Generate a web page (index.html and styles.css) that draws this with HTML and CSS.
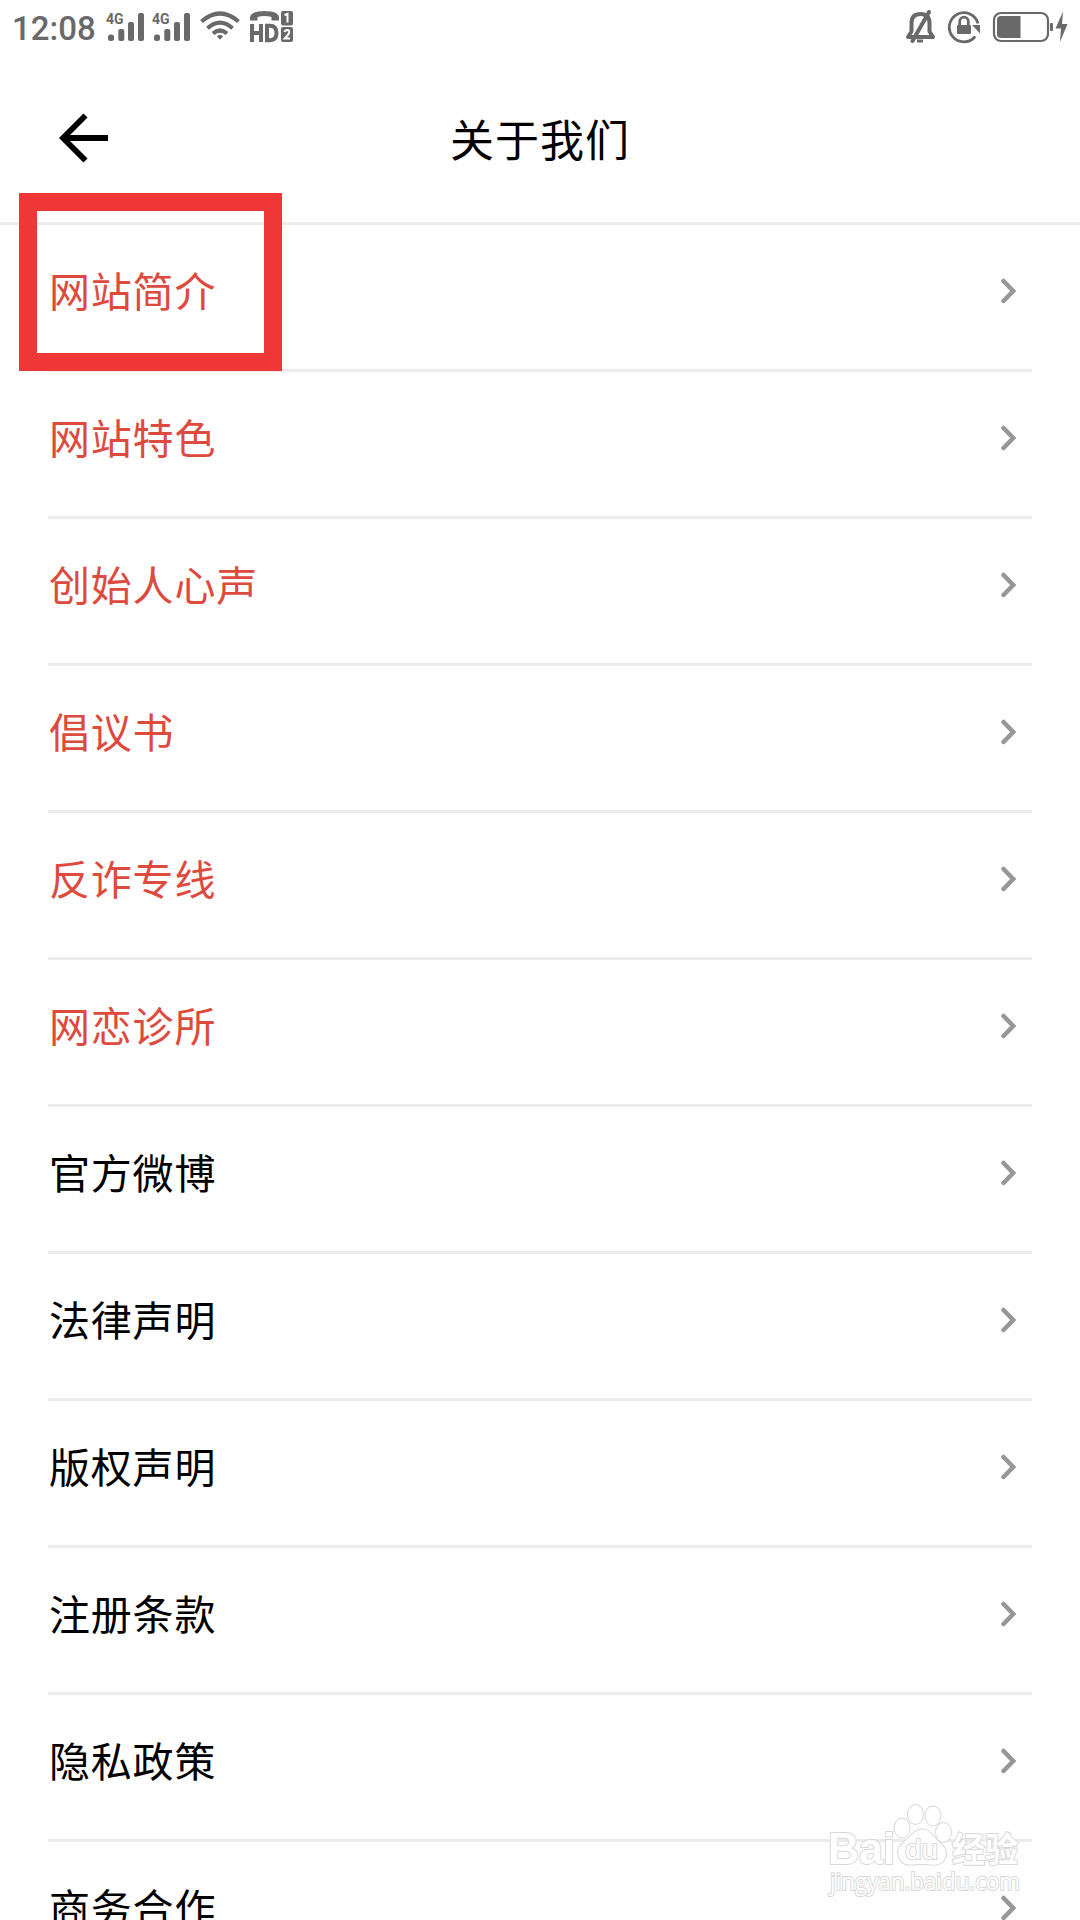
FILE: index.html
```html
<!DOCTYPE html>
<html lang="zh-CN">
<head>
<meta charset="utf-8">
<title>关于我们</title>
<link rel="stylesheet" href="styles.css">
</head>
<body>
<svg class="defs" aria-hidden="true">
  <symbol id="chevron" viewBox="0 0 18 26"><path d="M3.5 3L13.2 13L3.5 23" fill="none" stroke="#959799" stroke-width="4.5" stroke-linecap="round"/></symbol>
  <symbol id="signal" viewBox="0 0 40 32"><g fill="#696969"><rect x="2" y="21.5" width="6" height="6.5" rx="2.5"/><rect x="12.3" y="16" width="6" height="12" rx="2"/><rect x="22" y="9" width="6" height="19" rx="2"/><rect x="32" y="0" width="6" height="28" rx="2"/></g></symbol>
</svg>
<div class="screen">
  <div class="status">
    <span class="time">12:08</span>
    <div class="network"><svg class="bars"><use href="#signal"/></svg><span class="generation">4G</span></div>
    <div class="network"><svg class="bars"><use href="#signal"/></svg><span class="generation">4G</span></div>
    <svg class="wifi" viewBox="0 0 40 30" fill="none" stroke="#696969" stroke-width="4.2"><path d="M1.5 10.5Q20-5.5 38.5 10.5M7.5 17.2Q20 6 32.5 17.2M13 22.5Q20 16.5 27 22.5"/><path d="M16.8 25.2Q20 22.7 23.2 25.2L20 28.8Z" fill="#696969" stroke="none"/></svg>
    <svg class="hd" viewBox="0 0 45 32"><path d="M1 9.5V7Q1 0 15.5 0T30 7V9.5H22.5V6Q15.5 3.8 8.5 6V9.5Z" fill="#696969"/><path d="M3 13V31M12 13V31M3 22H12M18 14.8V29.2H21Q27.5 29.2 27.5 22T21 14.8Z" fill="none" stroke="#696969" stroke-width="4"/><rect x="32" y="0" width="12" height="14.5" rx="2" fill="#696969"/><rect x="32" y="16" width="12" height="15" rx="2" fill="#696969"/><path d="M35.5 4L38.5 3V11.5M35.5 21Q36 19 38.3 19Q40.5 19.2 40.2 21.5Q40 23 35.8 27.5H41" fill="none" stroke="#fff" stroke-width="2"/></svg>
    <div class="system">
      <svg class="bell" viewBox="0 0 31 34"><g fill="none" stroke="#696969"><path d="M3 27L6.5 21.5V13Q6.5 4 15.5 4T24.5 13V21.5L28 27Z" stroke-width="4" stroke-linejoin="round"/><path d="M12 31H18" stroke-width="3"/><path d="M7.5 31L24 2" stroke-width="4" stroke-linecap="round"/></g></svg>
      <svg class="lock" viewBox="0 0 34 34"><path d="M28.2 26.5A14.6 14.6 0 1 1 31 13.5" fill="none" stroke="#696969" stroke-width="2.8"/><path d="M25 15H33V23.5Z" fill="#696969"/><rect x="10" y="15" width="14" height="9" rx="1" fill="#696969"/><path d="M12.7 15V11.5A4.3 4.3 0 0 1 21.3 11.5V15" fill="none" stroke="#696969" stroke-width="2.8"/></svg>
      <svg class="battery" viewBox="0 0 78 34"><rect x="2" y="3" width="54" height="28" rx="7" fill="none" stroke="#696969" stroke-width="2.2"/><path d="M28.5 6H9Q5 6 5 10V24Q5 28 9 28H28.5Z" fill="#696969"/><rect x="58" y="13" width="3" height="8" rx="1" fill="#696969"/><path d="M71 1.5L63.5 18.5H69L68 32L75.5 14H70Z" fill="#696969"/></svg>
    </div>
  </div>
  <header class="header">
    <svg class="back" viewBox="0 0 50 50"><path d="M26.5 2.5L4 25L26.5 47.5M4 25H49" fill="none" stroke="#000" stroke-width="5.8"/></svg>
    <h1 class="title">关于我们</h1>
  </header>
  <ul class="list">
    <li class="row accent"><span class="label">网站简介</span><svg class="chevron"><use href="#chevron"/></svg><i class="highlight"></i></li>
    <li class="row accent"><span class="label">网站特色</span><svg class="chevron"><use href="#chevron"/></svg></li>
    <li class="row accent"><span class="label">创始人心声</span><svg class="chevron"><use href="#chevron"/></svg></li>
    <li class="row accent"><span class="label">倡议书</span><svg class="chevron"><use href="#chevron"/></svg></li>
    <li class="row accent"><span class="label">反诈专线</span><svg class="chevron"><use href="#chevron"/></svg></li>
    <li class="row accent"><span class="label">网恋诊所</span><svg class="chevron"><use href="#chevron"/></svg></li>
    <li class="row"><span class="label">官方微博</span><svg class="chevron"><use href="#chevron"/></svg></li>
    <li class="row"><span class="label">法律声明</span><svg class="chevron"><use href="#chevron"/></svg></li>
    <li class="row"><span class="label">版权声明</span><svg class="chevron"><use href="#chevron"/></svg></li>
    <li class="row"><span class="label">注册条款</span><svg class="chevron"><use href="#chevron"/></svg></li>
    <li class="row"><span class="label">隐私政策</span><svg class="chevron"><use href="#chevron"/></svg></li>
    <li class="row"><span class="label">商务合作</span><svg class="chevron"><use href="#chevron"/></svg></li>
  </ul>
  <svg class="watermark" viewBox="0 0 210 100">
    <g class="outline">
      <text class="mark-latin" x="4" y="60" textLength="67" lengthAdjust="spacingAndGlyphs">Bai</text>
      <ellipse cx="78" cy="24" rx="7.5" ry="9.5"/><ellipse cx="91.5" cy="10.5" rx="7.5" ry="9.5"/><ellipse cx="109" cy="12" rx="7.5" ry="9.5"/><ellipse cx="119.5" cy="28.5" rx="7.5" ry="9.5"/>
      <path d="M98 25.5C90 25.5 87 33 80 38C74 43 73 49 76 55C80 63 88 60 98 60C108 60 115 63 120 56C124 49 121 43 115 38C108 32 106 25.5 98 25.5Z"/>
      <text class="mark-du" x="81" y="55" textLength="33" lengthAdjust="spacingAndGlyphs">du</text>
      <text class="mark-cjk" x="128" y="58" textLength="66" lengthAdjust="spacingAndGlyphs">经验</text>
      <text class="mark-url" x="6" y="86" textLength="190" lengthAdjust="spacingAndGlyphs">jingyan.baidu.com</text>
    </g>
  </svg>
</div>
</body>
</html>
```
FILE: styles.css
```css
* { box-sizing: border-box; }
body { margin: 0; background: #fff; }
.defs { position: absolute; width: 0; height: 0; }
.screen {
  position: relative;
  display: flex;
  flex-direction: column;
  width: 1080px;
  height: 1920px;
  overflow: hidden;
  background: #fefefe;
  color: #000;
  font-family: "Noto Sans CJK SC", sans-serif;
}
.status {
  display: flex;
  flex: none;
  height: 56px;
  padding: 11px 10px 0 12px;
  align-items: flex-start;
}
.time {
  width: 94px;
  margin-top: 1px;
  color: #696969;
  font: 500 33px/34px Roboto, sans-serif;
}
.network { position: relative; width: 46px; height: 32px; }
.bars { display: block; width: 40px; height: 32px; margin: 2px 0 0; }
.generation {
  position: absolute;
  top: 1px;
  left: 0;
  color: #696969;
  font: 700 14px/14px Roboto, sans-serif;
}
.wifi { width: 40px; height: 30px; margin: 0 0 0 2px; }
.hd { width: 45px; height: 32px; margin-left: 9px; }
.system { display: flex; margin: -1px 0 0 auto; }
.bell { width: 31px; height: 34px; }
.lock { width: 34px; height: 34px; margin-left: 11px; }
.battery { width: 78px; height: 34px; margin-left: 11px; }
.header {
  display: grid;
  grid-template-columns: 160px 1fr 160px;
  flex: none;
  height: 169px;
  border-bottom: 3px solid #ebecee;
}
.back { width: 50px; height: 50px; margin: 57px 0 0 59px; }
.title {
  margin: 52px 0 0;
  font-size: 44px;
  letter-spacing: 1px;
  line-height: 60px;
  font-weight: 400;
  text-align: center;
}
.list { flex: none; margin: 0; padding: 0 48px; list-style: none; }
.row {
  position: relative;
  display: flex;
  justify-content: space-between;
  align-items: center;
  height: 147px;
  padding: 0 14px 12px 1px;
  border-bottom: 3px solid #ebecee;
}
.accent { color: #dd4a3e; }
.label { margin-bottom: 5px; font-size: 41px; letter-spacing: 0.8px; line-height: 60px; }
.chevron { width: 18px; height: 26px; }
.highlight {
  position: absolute;
  top: -32px;
  left: -29px;
  width: 263px;
  height: 178px;
  border: 18px solid #ef3737;
}
.watermark {
  position: absolute;
  top: 1804px;
  left: 824px;
  width: 210px;
  height: 100px;
}
.outline { fill: #fff; stroke: #d8d8d8; stroke-width: 2; paint-order: stroke; }
.mark-latin { font: 700 44px "Liberation Sans", sans-serif; }
.mark-du { font: 400 28px "Liberation Sans", sans-serif; }
.mark-cjk { font: 700 34px "Noto Sans CJK SC", sans-serif; }
.mark-url { font: 400 23px "Open Sans", sans-serif; }
```
